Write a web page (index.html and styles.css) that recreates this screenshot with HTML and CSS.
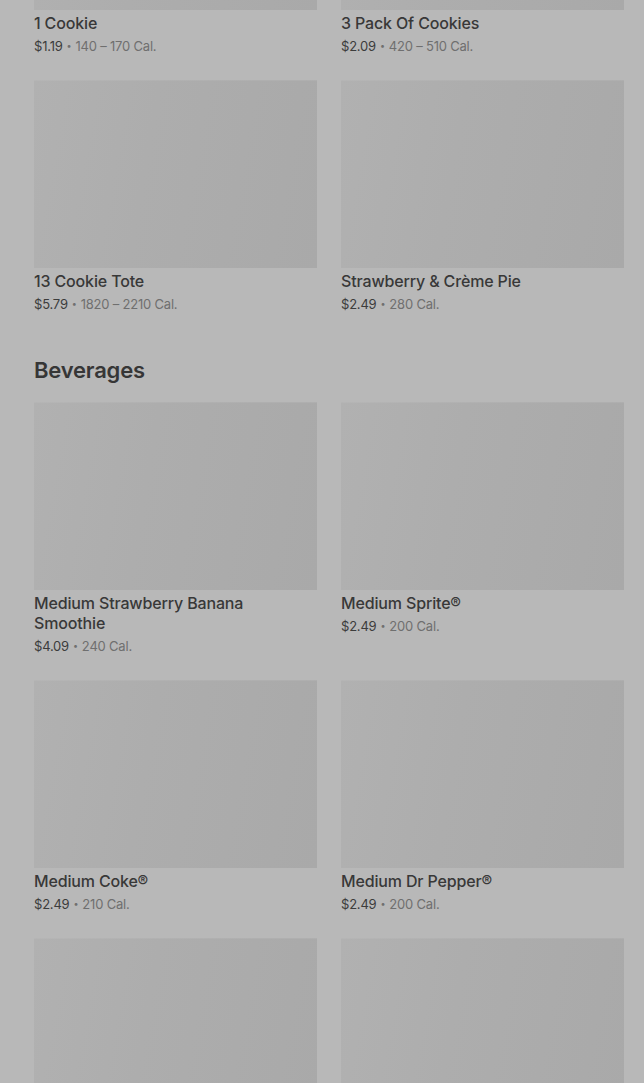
FILE: index.html
```html
<!DOCTYPE html>
<html lang="en">
<head>
<meta charset="utf-8">
<title>Menu</title>
<link rel="stylesheet" href="styles.css">
</head>
<body>
<main class="menu">
  <section class="section">
    <div class="grid">
      <article class="item">
        <div class="thumb"></div>
        <h3 class="name">1 Cookie</h3>
        <p class="meta"><span class="price">$1.19</span><span class="dot">•</span><span class="cal">140 – 170 Cal.</span></p>
      </article>
      <article class="item">
        <div class="thumb"></div>
        <h3 class="name">3 Pack Of Cookies</h3>
        <p class="meta"><span class="price">$2.09</span><span class="dot">•</span><span class="cal">420 – 510 Cal.</span></p>
      </article>
      <article class="item">
        <div class="thumb"></div>
        <h3 class="name">13 Cookie Tote</h3>
        <p class="meta"><span class="price">$5.79</span><span class="dot">•</span><span class="cal">1820 – 2210 Cal.</span></p>
      </article>
      <article class="item">
        <div class="thumb"></div>
        <h3 class="name">Strawberry &amp; Crème Pie</h3>
        <p class="meta"><span class="price">$2.49</span><span class="dot">•</span><span class="cal">280 Cal.</span></p>
      </article>
    </div>
  </section>
  <section class="section">
    <h2 class="section-title">Beverages</h2>
    <div class="grid">
      <article class="item">
        <div class="thumb"></div>
        <h3 class="name">Medium Strawberry Banana Smoothie</h3>
        <p class="meta"><span class="price">$4.09</span><span class="dot">•</span><span class="cal">240 Cal.</span></p>
      </article>
      <article class="item">
        <div class="thumb"></div>
        <h3 class="name">Medium Sprite®</h3>
        <p class="meta"><span class="price">$2.49</span><span class="dot">•</span><span class="cal">200 Cal.</span></p>
      </article>
      <article class="item">
        <div class="thumb"></div>
        <h3 class="name">Medium Coke®</h3>
        <p class="meta"><span class="price">$2.49</span><span class="dot">•</span><span class="cal">210 Cal.</span></p>
      </article>
      <article class="item">
        <div class="thumb"></div>
        <h3 class="name">Medium Dr Pepper®</h3>
        <p class="meta"><span class="price">$2.49</span><span class="dot">•</span><span class="cal">200 Cal.</span></p>
      </article>
      <article class="item">
        <div class="thumb"></div>
      </article>
      <article class="item">
        <div class="thumb"></div>
      </article>
    </div>
  </section>
</main>
</body>
</html>
```
FILE: styles.css
```css
html, body {
  margin: 0;
  padding: 0;
  background: #b8b8b8;
  overflow: hidden;
  height: 1083px;
}

body {
  font-family: "Inter", "Noto Sans", "Liberation Sans", sans-serif;
  color: #3a3a3a;
}

.menu {
  margin-top: -178px;
  padding: 0 20px 0 34px;
}

.grid {
  display: grid;
  grid-template-columns: 283px 283px;
  column-gap: 24px;
  row-gap: 24px;
}

.item {
  margin: 0;
}

.thumb {
  height: 188px;
  background: linear-gradient(100deg, #b1b1b1 0%, #adadad 40%, #a9a9a9 100%);
  box-shadow: inset 0 1px 0 rgba(255,255,255,0.06);
}

.name {
  margin: 3px 0 0;
  font-size: 16px;
  line-height: 20px;
  font-weight: 500;
  color: #383838;
  letter-spacing: -0.15px;
}

.meta {
  margin: 3px 0 0;
  height: 20px;
  font-size: 13px;
  line-height: 20px;
  color: #6f6f6f;
  letter-spacing: -0.2px;
}

.price {
  color: #3c3c3c;
}

.dot {
  margin: 0 4px;
  font-size: 9px;
  line-height: 0;
  vertical-align: 2px;
}

.section-title {
  margin: 42px 0 18px;
  font-size: 22px;
  line-height: 28px;
  font-weight: 600;
  color: #363636;
  letter-spacing: -0.2px;
}
```
